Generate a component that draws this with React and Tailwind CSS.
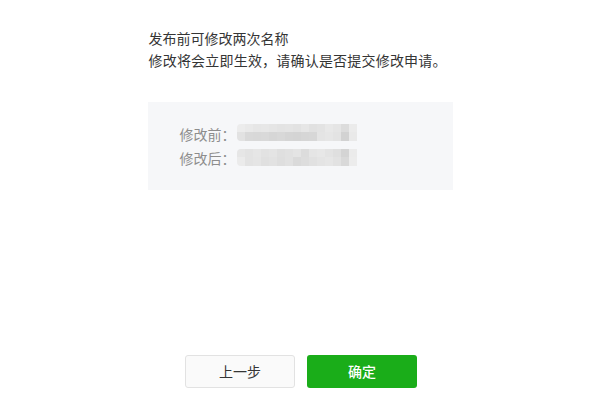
import React from 'react';

const font = { fontFamily: '"Noto Sans CJK SC", "Noto Sans", sans-serif' };

// 打码后的马赛克色块（两行，每行上下两排）
const mosaicRows = [
  {
    top: ['bg-[#ececec]', 'bg-[#e9e9e9]', 'bg-[#e6e6e6]', 'bg-[#e7e7e7]', 'bg-[#e5e5e5]', 'bg-[#e3e3e3]', 'bg-[#e4e4e4]', 'bg-[#e2e2e2]', 'bg-[#e6e6e6]', 'bg-[#e1e1e1]', 'bg-[#e3e3e3]', 'bg-[#e8e8e8]', 'bg-[#e5e5e5]', 'bg-[#dcdcdc]', 'bg-[#ebebeb]'],
    bottom: ['bg-[#e2e2e2]', 'bg-[#d9d9d9]', 'bg-[#d8d8d8]', 'bg-[#d9d9d9]', 'bg-[#d6d6d6]', 'bg-[#d8d8d8]', 'bg-[#d5d5d5]', 'bg-[#d4d4d4]', 'bg-[#d6d6d6]', 'bg-[#d7d7d7]', 'bg-[#e4e4e4]', 'bg-[#e6e6e6]', 'bg-[#e3e3e3]', 'bg-[#d2d2d2]', 'bg-[#e9e9e9]'],
  },
  {
    top: ['bg-[#e6e6e6]', 'bg-[#e3e3e3]', 'bg-[#e6e6e6]', 'bg-[#e2e2e2]', 'bg-[#e4e4e4]', 'bg-[#dfdfdf]', 'bg-[#e1e1e1]', 'bg-[#e4e4e4]', 'bg-[#dcdcdc]', 'bg-[#e5e5e5]', 'bg-[#e7e7e7]', 'bg-[#e3e3e3]', 'bg-[#dfdfdf]', 'bg-[#d4d4d4]', 'bg-[#ebebeb]'],
    bottom: ['bg-[#ebebeb]', 'bg-[#e3e3e3]', 'bg-[#e5e5e5]', 'bg-[#e0e0e0]', 'bg-[#e2e2e2]', 'bg-[#dedede]', 'bg-[#e1e1e1]', 'bg-[#dadada]', 'bg-[#dddddd]', 'bg-[#e1e1e1]', 'bg-[#e4e4e4]', 'bg-[#e6e6e6]', 'bg-[#e2e2e2]', 'bg-[#d9d9d9]', 'bg-[#ececec]'],
  },
];

const Mosaic = ({ row }) => (
  <div className="flex flex-col blur-[0.6px] rounded-l-[4px] overflow-hidden">
    <div className="flex">
      {row.top.map((c, i) => (
        <div key={i} className={`w-[8px] h-[8px] ${c}`} />
      ))}
    </div>
    <div className="flex">
      {row.bottom.map((c, i) => (
        <div key={i} className={`w-[8px] h-[9px] ${c}`} />
      ))}
    </div>
  </div>
);

const App = () => {
  return (
    <div className="h-[400px] w-[600px] bg-white flex flex-col" style={font}>
      {/* 说明 */}
      <div className="w-[305px] mx-auto pt-[27px]">
        <p className="text-[14px] leading-[22px] text-[#353535] pl-px">发布前可修改两次名称</p>
        <p className="text-[14px] leading-[22px] text-[#353535] pl-px whitespace-nowrap tracking-[0.2px]">
          修改将会立即生效，请确认是否提交修改申请。
        </p>

        {/* 修改前后 */}
        <div className="mt-[31px] bg-[#f6f7f9] pl-[32px] py-[20px]">
          <div className="flex items-center h-[24px] text-[14px] text-[#8d8d8d]">
            <span>修改前：</span>
            <div className="ml-[1px] -mt-[3px]">
              <Mosaic row={mosaicRows[0]} />
            </div>
          </div>
          <div className="flex items-center h-[24px] text-[14px] text-[#8d8d8d]">
            <span>修改后：</span>
            <div className="ml-[1px] -mt-[1px]">
              <Mosaic row={mosaicRows[1]} />
            </div>
          </div>
        </div>
      </div>

      {/* 按钮 */}
      <div className="mt-auto pb-[12px] flex justify-center gap-[12px] pl-[2px]">
        <button className="w-[110px] h-[33px] rounded-[3px] border border-[#e2e2e2] bg-[#fafafa] text-[14px] text-[#353535]">
          上一步
        </button>
        <button className="w-[110px] h-[33px] rounded-[3px] bg-[#1aad19] text-[14px] text-white font-medium">
          确定
        </button>
      </div>
    </div>
  );
};

export default App;
